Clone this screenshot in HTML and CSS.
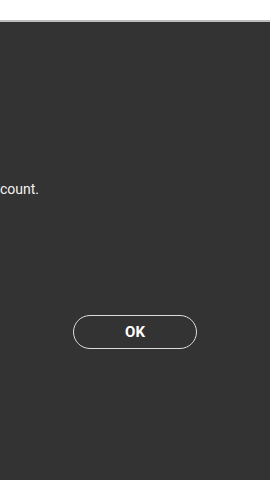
FILE: index.html
```html
<!DOCTYPE html>
<html lang="en">
<head>
<meta charset="utf-8">
<title>Dialog</title>
<link rel="stylesheet" href="styles.css">
</head>
<body>
<div class="topbar"></div>
<main class="dialog">
  <p class="message">count.</p>
  <div class="actions">
    <button class="ok-btn" type="button">OK</button>
  </div>
</main>
</body>
</html>
```
FILE: styles.css
```css
html, body {
  margin: 0;
  padding: 0;
  height: 100%;
}
body {
  display: flex;
  flex-direction: column;
  background: #333333;
  font-family: Roboto, "Liberation Sans", sans-serif;
  overflow: hidden;
}
.topbar {
  height: 20px;
  background: #ffffff;
  border-bottom: 2px solid #bdbdbd;
  flex: none;
}
.dialog {
  flex: 1;
  display: flex;
  flex-direction: column;
  background: #333333;
}
.message {
  margin: 157px 0 0 0;
  font-size: 14px;
  line-height: 20px;
  color: #f2f2f2;
}
.actions {
  display: flex;
  justify-content: center;
  margin-top: 116px;
}
.ok-btn {
  width: 124px;
  height: 34px;
  border: 1.5px solid #dcdcdc;
  border-radius: 17px;
  background: transparent;
  color: #ffffff;
  font-family: Roboto, "Liberation Sans", sans-serif;
  font-weight: bold;
  font-size: 15px;
  padding: 0;
}
```
